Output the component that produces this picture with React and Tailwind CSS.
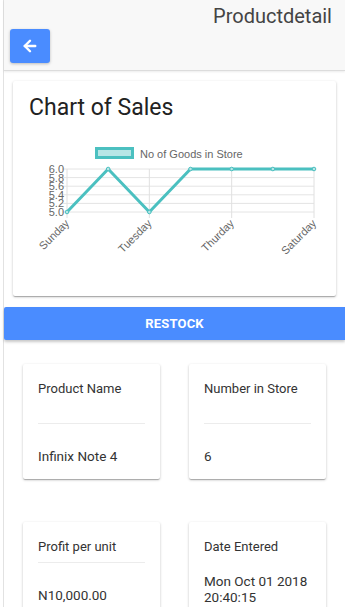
import React from 'react';
import { ArrowLeft } from 'lucide-react';

const days = ['Sunday', 'Monday', 'Tuesday', 'Wednesday', 'Thurday', 'Friday', 'Saturday'];
const stock = [5, 6, 5, 6, 6, 6, 6];

const cardShadow =
  'shadow-[0_1px_3px_rgba(0,0,0,0.2),0_1px_1px_rgba(0,0,0,0.14),0_2px_1px_-1px_rgba(0,0,0,0.12)]';

function SalesChart() {
  const left = 54;
  const right = 301;
  const top = 30;
  const bottom = 73;
  const xs = days.map((_, i) => left + ((right - left) / 6) * i);
  const yOf = (v) => bottom - (v - 5) * (bottom - top);
  const ticks = [6.0, 5.8, 5.6, 5.4, 5.2, 5.0];
  const points = stock.map((v, i) => `${xs[i]},${yOf(v)}`).join(' ');

  return (
    <svg width="323" height="157" className="block" style={{ fontFamily: '"Liberation Sans", Arial, sans-serif' }}>
      {/* legend */}
      <rect x="83.5" y="9.5" width="36" height="9" fill="#b7e6e6" stroke="#4bc0c0" strokeWidth="3" />
      <text x="127" y="18.5" fontSize="11" fill="#666">No of Goods in Store</text>

      {/* grid */}
      {ticks.map((t) => (
        <g key={t}>
          <line x1={left - 5} x2={right} y1={yOf(t)} y2={yOf(t)} stroke="#e4e4e4" strokeWidth="1" />
          <text x={left - 3} y={yOf(t) + 4} fontSize="11" fill="#666" textAnchor="end">{t.toFixed(1)}</text>
        </g>
      ))}
      {[0, 2, 4, 6].map((i) => (
        <line key={i} x1={xs[i]} x2={xs[i]} y1={top} y2={bottom + 6} stroke="#e0e0e0" strokeWidth="1" />
      ))}

      {/* x labels */}
      {[0, 2, 4, 6].map((i) => (
        <text
          key={days[i]}
          x={xs[i] + 3}
          y={bottom + 12}
          fontSize="11"
          fill="#666"
          textAnchor="end"
          transform={`rotate(-45 ${xs[i] + 3} ${bottom + 12})`}
        >
          {days[i]}
        </text>
      ))}

      {/* data */}
      <polyline points={points} fill="none" stroke="#4bc0c0" strokeWidth="3" strokeLinejoin="round" />
      {stock.map((v, i) => (
        <circle key={i} cx={xs[i]} cy={yOf(v)} r="1.8" fill="#b7e6e6" stroke="#4bc0c0" strokeWidth="1" />
      ))}
    </svg>
  );
}

function InfoCard({ label, children, gap, divider = true }) {
  return (
    <div className={`bg-white rounded-[2px] ${cardShadow} px-[15px] pt-[17px] pb-[15px]`}>
      <div className="text-[13px] leading-[16px] text-[#333]">{label}</div>
      {divider ? (
        <div className={`${gap} border-t border-[#ececec]`} />
      ) : (
        <div className={gap} />
      )}
      <div className="text-[13.5px] leading-[16px] text-[#333]">{children}</div>
    </div>
  );
}

export default function App() {
  return (
    <div className="min-h-screen bg-white" style={{ fontFamily: 'Roboto, "Noto Sans", sans-serif' }}>
      <div className="ml-[3px] border-l border-[#e2e2e2] min-h-screen">
        {/* header */}
        <header className="h-[71px] bg-[#f8f8f8] border-b border-[#dcdcdc] shadow-[0_1px_2px_rgba(0,0,0,0.08)]">
          <div className="flex justify-end pr-[13px] pt-[3px]">
            <h1 className="text-[20px] leading-[26px] text-[#444]">Productdetail</h1>
          </div>
          <button className="ml-[6px] w-[40px] h-[34px] rounded-[3px] bg-[#4a8cff] flex items-center justify-center shadow-[0_1px_3px_rgba(0,0,0,0.25)]">
            <ArrowLeft className="w-[18px] h-[18px] text-white" strokeWidth={3.2} />
          </button>
        </header>

        {/* chart card */}
        <div className="pt-[10px] pl-[9px] pr-[9px]">
          <div className={`bg-white rounded-[2px] ${cardShadow} h-[215px]`}>
            <div className="h-[58px] pt-[15px] pl-[16px]">
              <h2 className="text-[23px] leading-[23px] text-[#222]">Chart of Sales</h2>
            </div>
            <SalesChart />
          </div>
        </div>

        {/* restock */}
        <div className="pt-[11px]">
          <button className="w-full h-[33px] bg-[#4a8cff] text-white text-[13px] font-bold tracking-[0.2px] rounded-l-[2px] shadow-[0_2px_3px_rgba(0,0,0,0.22)]">
            RESTOCK
          </button>
        </div>

        {/* details */}
        <div className="px-[19px] pt-[24px] grid grid-cols-2 gap-x-[29px] gap-y-[43px]">
          <InfoCard label="Product Name" gap="mt-[26px] mb-[24px]">Infinix Note 4</InfoCard>
          <InfoCard label="Number in Store" gap="mt-[26px] mb-[24px]">6</InfoCard>
          <InfoCard label="Profit per unit" gap="mt-[7px] mb-[24px]">N10,000.00</InfoCard>
          <InfoCard label="Date Entered" gap="mt-[18px]" divider={false}>
            Mon Oct 01 2018 20:40:15 GMT+0100 (West Africa Standard Time)
          </InfoCard>
        </div>
      </div>
    </div>
  );
}
